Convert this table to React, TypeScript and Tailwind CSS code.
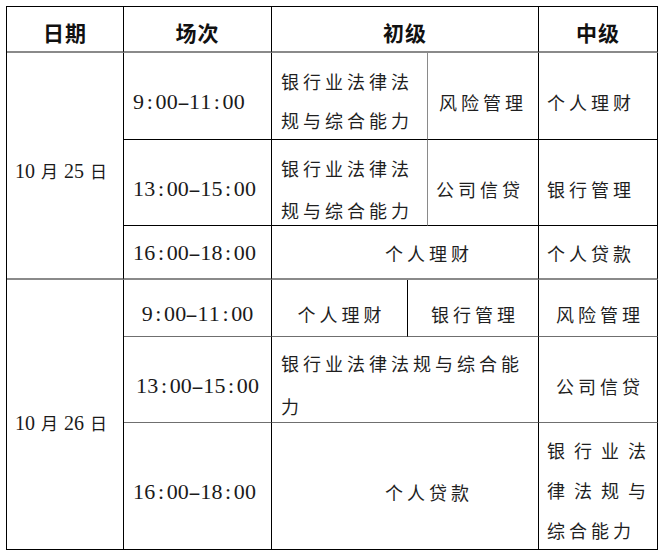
import React from "react";

const cjk = "font-['Noto_Sans_CJK_SC',sans-serif]";

function Time({ t }: { t: string }) {
  return (
    <span className="inline-flex font-['Liberation_Serif',serif] text-[22px] leading-none text-[#1a1a1a]">
      {t.split("").map((c, i) => (
        <span
          key={i}
          className={
            c === "-"
              ? "inline-block w-[11.2px] text-center scale-x-[1.7]"
              : "inline-block w-[11.2px] text-center"
          }
        >
          {c}
        </span>
      ))}
    </span>
  );
}

function Body({ children }: { children: React.ReactNode }) {
  return (
    <span className={`${cjk} text-[18px] tracking-[4px] text-[#1f1f1f] leading-none`}>{children}</span>
  );
}

function Line({ children, lh, wide = false }: { children: React.ReactNode; lh: string; wide?: boolean }) {
  return (
    <div
      className={`${cjk} text-[18px] text-[#1f1f1f] whitespace-nowrap ${wide ? "tracking-[9px]" : "tracking-[4px]"} ${lh}`}
    >
      {children}
    </div>
  );
}

function DateText({ d }: { d: string }) {
  return (
    <span className="inline-flex items-baseline gap-[6px] leading-none text-[#1a1a1a]">
      <span className="font-['Liberation_Serif',serif] text-[20px]">10</span>
      <span className={`${cjk} text-[17px]`}>月</span>
      <span className="font-['Liberation_Serif',serif] text-[20px]">{d}</span>
      <span className={`${cjk} text-[17px]`}>日</span>
    </span>
  );
}

export default function App() {
  return (
    <div className="w-[665px] h-[558px] bg-white">
      <div className="ml-[6px] pt-[6px]">
        <div className="grid w-[652px] grid-cols-[117px_148px_136px_20px_111px_119px] grid-rows-[46px_87px_86px_54px_57px_86px_127px] border-l border-t border-black">
          {/* Header */}
          <div className="flex items-center justify-center pt-[7px] border-r border-black border-b-2 border-b-[#8a8a8a]">
            <span className={`${cjk} text-[21px] font-bold tracking-[1px] text-[#111]`}>日期</span>
          </div>
          <div className="flex items-center justify-center pt-[7px] border-r border-black border-b-2 border-b-[#8a8a8a]">
            <span className={`${cjk} text-[21px] font-bold tracking-[1px] text-[#111]`}>场次</span>
          </div>
          <div className="col-span-3 flex items-center justify-center pt-[7px] border-r border-black border-b-2 border-b-[#8a8a8a]">
            <span className={`${cjk} text-[21px] font-bold tracking-[1px] text-[#111]`}>初级</span>
          </div>
          <div className="flex items-center justify-center pt-[7px] border-r border-black border-b-2 border-b-[#8a8a8a]">
            <span className={`${cjk} text-[21px] font-bold tracking-[1px] text-[#111]`}>中级</span>
          </div>

          {/* Date 1 */}
          <div className="col-start-1 row-start-2 row-span-3 flex items-center pl-[8px] pt-[11px] border-r border-black border-b-2 border-b-[#8a8a8a]">
            <DateText d="25" />
          </div>

          {/* Row 1 */}
          <div className="col-start-2 row-start-2 flex items-center pl-[9px] pt-[12px] border-r border-b border-black">
            <Time t="9:00-11:00" />
          </div>
          <div className="col-start-3 col-span-2 row-start-2 flex flex-col justify-center pl-[9px] pt-[10px] border-r border-r-[#8a8a8a] border-b border-b-black">
            <Line lh="leading-[39px]">银行业法律法</Line>
            <Line lh="leading-[39px]">规与综合能力</Line>
          </div>
          <div className="col-start-5 row-start-2 flex items-center pl-[11px] pt-[12px] border-r border-b border-black">
            <Body>风险管理</Body>
          </div>
          <div className="col-start-6 row-start-2 flex items-center pl-[8px] pt-[12px] border-r border-b border-black">
            <Body>个人理财</Body>
          </div>

          {/* Row 2 */}
          <div className="col-start-2 row-start-3 flex items-center pl-[9px] pt-[12px] border-r border-b border-black">
            <Time t="13:00-15:00" />
          </div>
          <div className="col-start-3 col-span-2 row-start-3 flex flex-col justify-center pl-[9px] pt-[12px] border-r border-r-[#8a8a8a] border-b border-b-black">
            <Line lh="leading-[42px]">银行业法律法</Line>
            <Line lh="leading-[42px]">规与综合能力</Line>
          </div>
          <div className="col-start-5 row-start-3 flex items-center pl-[8px] pt-[12px] border-r border-b border-black">
            <Body>公司信贷</Body>
          </div>
          <div className="col-start-6 row-start-3 flex items-center pl-[8px] pt-[12px] border-r border-b border-black">
            <Body>银行管理</Body>
          </div>

          {/* Row 3 */}
          <div className="col-start-2 row-start-4 flex items-center pl-[9px] pt-[1px] border-r border-black border-b-2 border-b-[#8a8a8a]">
            <Time t="16:00-18:00" />
          </div>
          <div className="col-start-3 col-span-3 row-start-4 flex items-center justify-center pl-[48px] pt-[1px] border-r border-black border-b-2 border-b-[#8a8a8a]">
            <Body>个人理财</Body>
          </div>
          <div className="col-start-6 row-start-4 flex items-center pl-[8px] pt-[1px] border-r border-black border-b-2 border-b-[#8a8a8a]">
            <Body>个人贷款</Body>
          </div>

          {/* Date 2 */}
          <div className="col-start-1 row-start-5 row-span-3 flex items-center pl-[8px] pt-[16px] border-r border-b border-black">
            <DateText d="26" />
          </div>

          {/* Row 4 */}
          <div className="col-start-2 row-start-5 flex items-center justify-center pt-[12px] border-r border-black border-b border-b-[#6f6f6f]">
            <Time t="9:00-11:00" />
          </div>
          <div className="col-start-3 row-start-5 flex items-center justify-center pl-[4px] pt-[12px] border-r border-black border-b border-b-[#6f6f6f]">
            <Body>个人理财</Body>
          </div>
          <div className="col-start-4 col-span-2 row-start-5 flex items-center justify-center pl-[4px] pt-[12px] border-r border-black border-b border-b-[#6f6f6f]">
            <Body>银行管理</Body>
          </div>
          <div className="col-start-6 row-start-5 flex items-center justify-center pl-[4px] pt-[12px] border-r border-black border-b border-b-[#6f6f6f]">
            <Body>风险管理</Body>
          </div>

          {/* Row 5 */}
          <div className="col-start-2 row-start-6 flex items-center justify-center pt-[12px] border-r border-black border-b border-b-[#6f6f6f]">
            <Time t="13:00-15:00" />
          </div>
          <div className="col-start-3 col-span-3 row-start-6 flex flex-col justify-center pl-[9px] pt-[11px] border-r border-black border-b border-b-[#6f6f6f]">
            <Line lh="leading-[43px]">银行业法律法规与综合能</Line>
            <Line lh="leading-[43px]">力</Line>
          </div>
          <div className="col-start-6 row-start-6 flex items-center justify-center pl-[4px] pt-[12px] border-r border-black border-b border-b-[#6f6f6f]">
            <Body>公司信贷</Body>
          </div>

          {/* Row 6 */}
          <div className="col-start-2 row-start-7 flex items-center pl-[9px] pt-[11px] border-r border-b border-black">
            <Time t="16:00-18:00" />
          </div>
          <div className="col-start-3 col-span-3 row-start-7 flex items-center justify-center pl-[48px] pt-[11px] border-r border-b border-black">
            <Body>个人贷款</Body>
          </div>
          <div className="col-start-6 row-start-7 flex flex-col justify-center pl-[8px] pt-[8px] border-r border-b border-black">
            <Line lh="leading-[40px]" wide>银行业法</Line>
            <Line lh="leading-[40px]" wide>律法规与</Line>
            <Line lh="leading-[40px]">综合能力</Line>
          </div>
        </div>
      </div>
    </div>
  );
}
